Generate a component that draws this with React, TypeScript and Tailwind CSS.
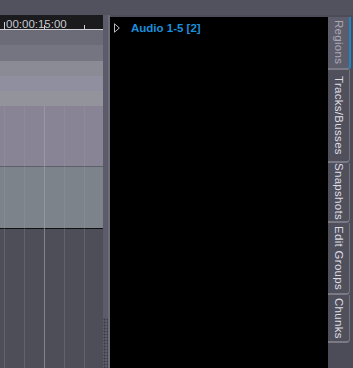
import React from 'react'

const tabs = [
  { label: 'Regions', h: 'h-[53px]', active: true },
  { label: 'Tracks/Busses', h: 'h-[93px]', active: false },
  { label: 'Snapshots', h: 'h-[60px]', active: false },
  { label: 'Edit Groups', h: 'h-[72px]', active: false },
  { label: 'Chunks', h: 'h-[48px]', active: false },
]

const gridLines = [4, 24, 44, 64, 84]

function Ruler() {
  return (
    <div className="relative h-[15px] bg-[#1b1b1e] border-b border-[#cfcfd4]">
      <span className="absolute left-[4px] top-[7px] h-[7px] w-px bg-[#cfcfd4]" />
      <span className="absolute left-[44px] top-[10px] h-[4px] w-px bg-[#cfcfd4]" />
      <span className="absolute left-[84px] top-[10px] h-[4px] w-px bg-[#cfcfd4]" />
      <span className="absolute left-[6px] top-[3px] text-[11.5px] leading-[13px] text-[#c9c9cf]">
        00:00:15:00
      </span>
    </div>
  )
}

function Timeline() {
  return (
    <div className="flex w-[103px] flex-col">
      <Ruler />
      <div className="h-[15px] bg-[#6c6c78]" />
      <div className="h-[16px] bg-[#757582]" />
      <div className="h-[15px] bg-[#8b8b96]" />
      <div className="h-[15px] bg-[#8f8fa0]" />
      <div className="h-[15px] bg-[#93939c]" />
      <div className="relative flex flex-1 flex-col">
        <div className="h-[61px] bg-[#888495] border-b border-[#5c6068]" />
        <div className="h-[62px] bg-[#7d838a] border-b border-[#111]" />
        <div className="flex-1 bg-[#4e4e59]" />
        {gridLines.map((x) => (
          <span
            key={x}
            className={`absolute top-0 bottom-0 w-px ${x === 44 ? 'bg-[#a6a4b4]/60' : 'bg-[#a09cac]/25'}`}
            style={{ left: x }}
          />
        ))}
      </div>
    </div>
  )
}

function Divider() {
  return (
    <div className="flex w-[7px] flex-col bg-[#5b5b69] border-r-2 border-[#6c6c79]">
      <div className="flex-1" />
      <div className="h-[50px] bg-[radial-gradient(circle,#3c3c48_0.9px,transparent_1.1px)] bg-[length:3px_3px]" />
    </div>
  )
}

function TabStrip() {
  return (
    <div className="flex w-[25px] flex-col bg-[#4c4c58]">
      {tabs.map((t) => (
        <div
          key={t.label}
          className={`${t.h} flex shrink-0 items-center justify-center overflow-hidden rounded-br-[4px] border-b-2 border-b-[#7a7a86] ${
            t.active
              ? 'w-[23px] bg-[#5c5c6a] border-r-2 border-r-[#1d84c8]'
              : 'w-[22px] bg-[#50505d] border-r border-r-[#74747f]'
          }`}
        >
          <span
            className={`[writing-mode:vertical-rl] whitespace-nowrap text-[11.5px] leading-none tracking-[0.3px] ${
              t.active ? 'text-[#a9a9b4]' : 'text-[#dcdce2]'
            }`}
          >
            {t.label}
          </span>
        </div>
      ))}
    </div>
  )
}

export default function App() {
  return (
    <div
      className="flex h-[368px] w-[353px] flex-col overflow-hidden bg-[#4c4c58]"
      style={{ fontFamily: '"Liberation Sans", Arial, sans-serif' }}
    >
      <div className="h-[15px] bg-[#52525e]" />
      <div className="flex flex-1">
        <Timeline />
        <Divider />
        <div className="mt-[2px] flex flex-1">
          <div className="flex-1 bg-black pl-[4px] pt-[5px]">
            <div className="flex items-center gap-[11px]">
              <svg width="6" height="10" viewBox="0 0 6 10">
                <path d="M0.5 0.8 L5.3 5 L0.5 9.2 Z" fill="none" stroke="#b8b8c0" strokeWidth="1" />
              </svg>
              <span className="text-[11.5px] font-bold leading-[12px] text-[#1a8fdc]">Audio 1-5 [2]</span>
            </div>
          </div>
          <TabStrip />
        </div>
      </div>
    </div>
  )
}
